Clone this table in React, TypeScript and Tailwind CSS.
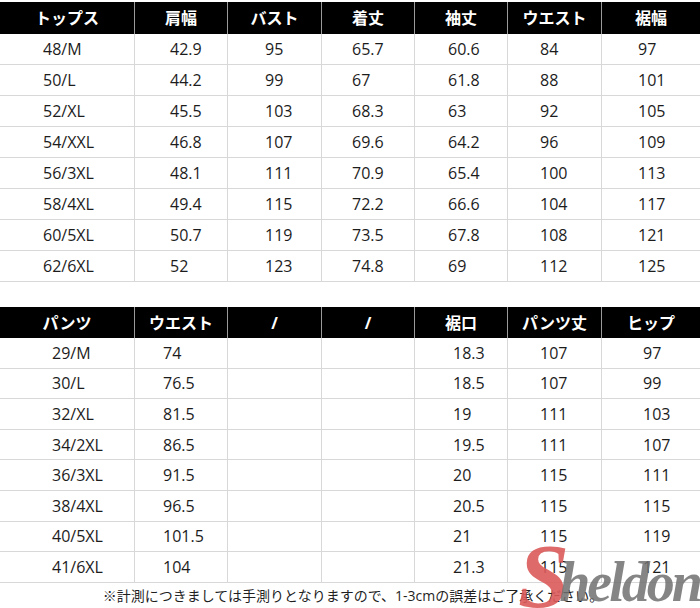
import React from 'react';

// size chart: tops + pants, with footnote and shop watermark
const COLS = 'grid grid-cols-[135px_93px_94px_93px_93px_94px_98px]';
const FONT = { fontFamily: '"Open Sans", "Noto Sans CJK JP", sans-serif' };

const topHead = ['トップス', '肩幅', 'バスト', '着丈', '袖丈', 'ウエスト', '裾幅'];
const topPad = ['pl-[43px]', 'pl-[35px]', 'pl-[37px]', 'pl-[30px]', 'pl-[33px]', 'pl-[32px]', 'pl-[36px]'];
const topRows = [
  ['48/M', '42.9', '95', '65.7', '60.6', '84', '97'],
  ['50/L', '44.2', '99', '67', '61.8', '88', '101'],
  ['52/XL', '45.5', '103', '68.3', '63', '92', '105'],
  ['54/XXL', '46.8', '107', '69.6', '64.2', '96', '109'],
  ['56/3XL', '48.1', '111', '70.9', '65.4', '100', '113'],
  ['58/4XL', '49.4', '115', '72.2', '66.6', '104', '117'],
  ['60/5XL', '50.7', '119', '73.5', '67.8', '108', '121'],
  ['62/6XL', '52', '123', '74.8', '69', '112', '125'],
];

const pantsHead = ['パンツ', 'ウエスト', '/', '/', '裾口', 'パンツ丈', 'ヒップ'];
const pantsPad = ['pl-[52px]', 'pl-[28px]', 'pl-[30px]', 'pl-[30px]', 'pl-[38px]', 'pl-[32px]', 'pl-[41px]'];
const pantsRows = [
  ['29/M', '74', '', '', '18.3', '107', '97'],
  ['30/L', '76.5', '', '', '18.5', '107', '99'],
  ['32/XL', '81.5', '', '', '19', '111', '103'],
  ['34/2XL', '86.5', '', '', '19.5', '111', '107'],
  ['36/3XL', '91.5', '', '', '20', '115', '111'],
  ['38/4XL', '96.5', '', '', '20.5', '115', '115'],
  ['40/5XL', '101.5', '', '', '21', '115', '119'],
  ['41/6XL', '104', '', '', '21.3', '115', '121'],
];

function SizeTable({
  head,
  rows,
  pad,
  headH,
  rowH,
}: {
  head: string[];
  rows: string[][];
  pad: string[];
  headH: string;
  rowH: string;
}) {
  return (
    <div>
      <div className={`${COLS} bg-black ${headH}`}>
        {head.map((h, i) => (
          <div
            key={i}
            className={`flex items-center justify-center text-white font-bold text-[16px] ${
              i < head.length - 1 ? 'border-r border-[#9a9a9a]' : ''
            }`}
          >
            {h}
          </div>
        ))}
      </div>
      {rows.map((r, ri) => (
        <div key={ri} className={`${COLS} ${rowH} border-b border-[#d8d8d8]`}>
          {r.map((c, ci) => (
            <div
              key={ci}
              className={`flex items-center text-[16px] text-[#1c1c1c] ${pad[ci]} ${
                ci < r.length - 1 ? 'border-r border-[#d8d8d8]' : ''
              }`}
            >
              {c}
            </div>
          ))}
        </div>
      ))}
    </div>
  );
}

export default function App() {
  return (
    <div className="relative w-[700px] h-[608px] overflow-hidden bg-white pt-[2px]" style={FONT}>
      <SizeTable head={topHead} rows={topRows} pad={topPad} headH="h-[32px]" rowH="h-[31px]" />

      <div className="mt-[25px]">
        <SizeTable head={pantsHead} rows={pantsRows} pad={pantsPad} headH="h-[31px]" rowH="h-[30.6px]" />
      </div>

      <p className="h-[25px] flex items-center justify-center pl-[6px] text-[14px] text-[#1f1f1f]">
        ※計測につきましては手測りとなりますので、1-3cmの誤差はご了承ください。
      </p>

      {/* shop watermark */}
      <div
        className="absolute left-[518px] top-[530px] flex items-end pointer-events-none select-none"
        style={{ fontFamily: '"Liberation Serif", serif' }}
      >
        <span className="text-[92px] leading-none font-bold italic text-[#dc5a5a]/90">S</span>
        <span className="-ml-[10px] mb-[12px] text-[56px] leading-none font-bold italic text-[#707070]/85 tracking-[-3px]">
          heldon
        </span>
      </div>
    </div>
  );
}
